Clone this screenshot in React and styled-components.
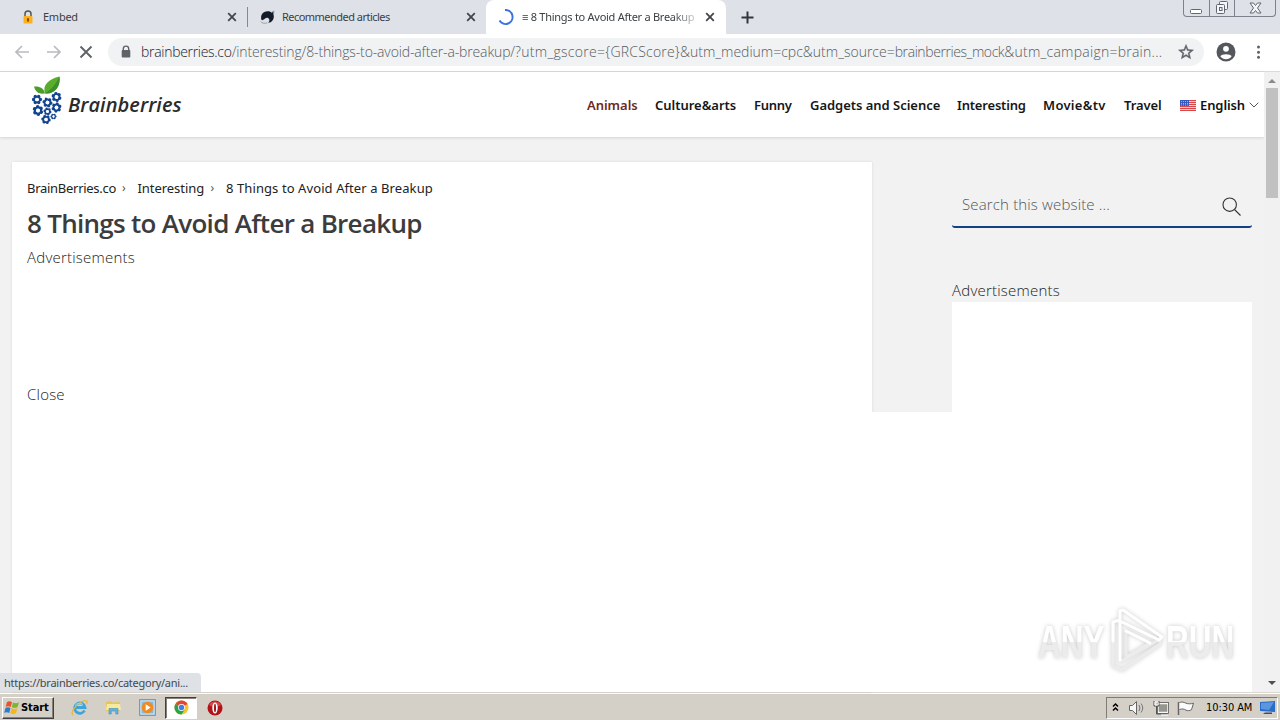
import React from 'react';
import styled, { createGlobalStyle, css } from 'styled-components';

const Global = createGlobalStyle`
  * { box-sizing: border-box; }
  html, body { margin: 0; padding: 0; }
  body { width: 1280px; height: 720px; overflow: hidden; background: #fff; font-family: "Noto Sans", "Open Sans", sans-serif; }
  svg { display: block; flex: none; }
`;

const Screen = styled.div`
  position: relative;
  width: 1280px;
  height: 720px;
  display: flex;
  flex-direction: column;
  overflow: hidden;
`;

const Label = styled.span`
  display: block;
  white-space: nowrap;
  flex: none;
  letter-spacing: ${(p) => p.$ls || 0}px;
`;

/* ---------- tab strip ---------- */
const TabStrip = styled.div`
  height: 34px;
  flex: none;
  display: flex;
  background: #dee1e8;
  font: 11px/34px "Noto Sans", sans-serif;
  color: #3c4043;
`;
const Tab = styled.div`
  width: ${(p) => p.$w}px;
  height: 34px;
  display: flex;
  align-items: center;
  padding: 0 ${(p) => p.$pr}px 0 ${(p) => p.$pl}px;
  gap: ${(p) => p.$gap}px;
  ${(p) => p.$active && css`
    background: #fff;
    border-radius: 8px 8px 0 0;
    color: #3c4043;
  `}
`;
const TabTitle = styled(Label)`
  flex: 1;
  overflow: hidden;
  ${(p) => p.$fade && css`
    -webkit-mask-image: linear-gradient(90deg, #000 86%, transparent 103%);
    mask-image: linear-gradient(90deg, #000 86%, transparent 103%);
  `}
`;
const Divider = styled.div`
  width: 1px;
  height: 20px;
  margin-top: 7px;
  background: #85888e;
`;
const NewTab = styled.div`
  display: flex;
  align-items: center;
  padding-left: 15px;
  flex: 1;
`;
const WindowButtons = styled.div`
  display: flex;
  width: 93px;
  height: 17px;
  margin-right: 4px;
  border: 1px solid #7d818b;
  border-top: 0;
  border-radius: 0 0 4px 4px;
`;
const WindowButton = styled.div`
  width: ${(p) => p.$w}px;
  display: flex;
  align-items: center;
  justify-content: center;
  & + & { border-left: 1px solid #7d818b; }
`;

/* ---------- address bar ---------- */
const Toolbar = styled.div`
  height: 38px;
  flex: none;
  display: flex;
  align-items: center;
  background: #fff;
  border-bottom: 1px solid #d9dadc;
  padding: 0 14px 1px 14px;
`;
const NavIcons = styled.div`
  display: flex;
  gap: 16px;
  margin-right: 14px;
`;
const Omnibox = styled.div`
  width: 1096px;
  height: 28px;
  border-radius: 14px;
  background: #f0f2f4;
  display: flex;
  align-items: center;
  padding: 0 9px 0 12px;
`;
const Url = styled.div`
  display: flex;
  flex: 1;
  margin-left: 9px;
  font: 300 14px/28px "Open Sans", "Noto Sans", sans-serif;
  color: #565b60;
`;
const UrlPart = styled(Label)`
  ${(p) => p.$host && css`color: #202124;`}
`;
const ToolbarEnd = styled.div`
  display: flex;
  align-items: center;
  gap: 17px;
  margin-left: 12px;
`;

/* ---------- page ---------- */
const Viewport = styled.div`
  height: 620px;
  flex: none;
  display: flex;
`;
const Page = styled.div`
  width: 1264px;
  display: flex;
  flex-direction: column;
  background: #f2f2f2;
`;
const SiteHeader = styled.header`
  height: 65px;
  flex: none;
  display: flex;
  background: #fff;
  box-shadow: 0 1px 3px rgba(0, 0, 0, 0.13);
  padding-left: 32px;
`;
const Logo = styled.div`
  display: flex;
  width: 555px;
`;
const LogoText = styled(Label)`
  font: italic 600 20px/30px "Open Sans", sans-serif;
  color: #2b2b2b;
  margin: 18px 0 0 4px;
`;
const Nav = styled.nav`
  display: flex;
  align-items: center;
  height: 65px;
  padding-top: 1px;
  font: 600 13px/20px "Noto Sans", sans-serif;
  color: #111;
`;
const NavItem = styled(Label)`
  width: ${(p) => p.$w}px;
  color: ${(p) => (p.$hot ? '#6d2a20' : '#161616')};
`;
const Language = styled.div`
  display: flex;
  align-items: center;
  gap: 4px;
`;
const Columns = styled.div`
  display: flex;
  height: 555px;
  padding: 25px 12px 0;
  position: relative;
`;
const Article = styled.main`
  width: 860px;
  background: #fff;
  padding: 16px 15px 0;
  box-shadow: 0 0 3px rgba(0, 0, 0, 0.1);
`;
const Crumbs = styled.div`
  display: flex;
  height: 20px;
  font: 13px/20px "Noto Sans", sans-serif;
  color: #222;
`;
const Crumb = styled(Label)`
  width: ${(p) => p.$w}px;
`;
const CrumbArrow = styled(Label)`
  width: 15.5px;
  font-size: 12px;
  line-height: 19px;
  color: #555;
`;
const Title = styled.h1`
  margin: 5px 0 0;
  font: 600 26px/40px "Open Sans", "Noto Sans", sans-serif;
  letter-spacing: -0.71px;
  color: #3c3c3c;
  white-space: nowrap;
`;
const Note = styled.p`
  margin: ${(p) => p.$mt || 0}px 0 0;
  font: 300 15px/24px "Open Sans", "Noto Sans", sans-serif;
  letter-spacing: ${(p) => p.$ls || 0}px;
  color: #222;
  white-space: nowrap;
`;
const Sidebar = styled.aside`
  width: 300px;
  margin-left: 80px;
  padding-top: 18px;
  display: flex;
  flex-direction: column;
`;
const Search = styled.div`
  height: 48px;
  display: flex;
  justify-content: space-between;
  padding: 12px 11px 0 10px;
  border-bottom: 2px solid #134182;
  border-radius: 3px;
  font: 300 15px/24px "Open Sans", "Noto Sans", sans-serif;
  color: #555;
  svg { margin-top: 5px; }
`;
const AdBox = styled.div`
  flex: 1;
  background: #fff;
`;
const AdOverlay = styled.div`
  position: absolute;
  left: 12px;
  right: 12px;
  top: 275px;
  bottom: 0;
  background: #fff;
`;
const ScrollTrack = styled.div`
  width: 16px;
  background: #f1f1f1;
  display: flex;
  flex-direction: column;
  align-items: center;
  padding: 7px 0 7px;
`;
const ScrollThumb = styled.div`
  width: 12px;
  height: 110px;
  margin: 5px 0 auto;
  background: #c1c1c1;
`;
const StatusBubble = styled.div`
  position: absolute;
  left: 0;
  top: 673px;
  width: 201px;
  height: 19px;
  background: #dee1e6;
  border-radius: 0 4px 0 0;
  padding-left: 4px;
  font: 11px/20px "Noto Sans", sans-serif;
  color: #45484c;
`;
const Watermark = styled.div`
  position: absolute;
  left: 1038px;
  top: 606px;
  width: 200px;
  height: 70px;
  display: flex;
  align-items: center;
  filter: drop-shadow(0 0 2px rgba(0, 0, 0, 0.22));
`;
const WatermarkText = styled.span`
  flex: none;
  width: 104px;
  margin-right: ${(p) => p.$pull}px;
  padding-top: 2px;
  font: 700 47px/70px "Liberation Sans", sans-serif;
  color: transparent;
  background: linear-gradient(#fff 0 51%, #ececec 51% 100%);
  -webkit-background-clip: text;
  background-clip: text;
  white-space: nowrap;
  transform: scaleX(${(p) => p.$sx});
  transform-origin: 0 50%;
`;

/* ---------- taskbar ---------- */
const Taskbar = styled.div`
  height: 28px;
  flex: none;
  display: flex;
  align-items: center;
  background: #d4cfc7;
  border-top: 1px solid #dcd9d3;
  box-shadow: inset 0 1px 0 #fff;
  padding: 2px 2px 0 2px;
  font: 11px/20px "DejaVu Sans Condensed", "DejaVu Sans", sans-serif;
  color: #000;
`;
const StartButton = styled.div`
  width: 52px;
  height: 22px;
  display: flex;
  align-items: center;
  gap: 1px;
  padding-left: 1px;
  font-weight: 700;
  border: 1px solid;
  border-color: #fff #404040 #404040 #fff;
  box-shadow: inset -1px -1px 0 #868279;
`;
const QuickLaunch = styled.div`
  display: flex;
  align-items: center;
  margin-left: 10px;
  flex: 1;
`;
const AppSlot = styled.div`
  width: 32px;
  height: 22px;
  margin-right: 1.8px;
  display: flex;
  align-items: center;
  justify-content: center;
  ${(p) => p.$active && css`
    background: #fff;
    border: 1px solid;
    border-color: #404040 #fff #fff #404040;
    box-shadow: inset 1px 1px 0 #868279;
  `}
`;
const Tray = styled.div`
  width: 172px;
  height: 22px;
  display: flex;
  align-items: center;
  border: 1px solid;
  border-color: #807c74 #fff #fff #807c74;
  padding-left: 5px;
`;
const Clock = styled(Label)`
  width: 48px;
  margin: 0 6px 0 10px;
`;

/* ---------- drawings ---------- */
const CloseX = () => (
  <svg width="10" height="10" viewBox="0 0 10 10" stroke="#43464b" strokeWidth="1.8"><path d="M1.200 1.200l7.600 7.600M8.800 1.200l-7.600 7.600" /></svg>
);
const PadlockEmoji = () => (
  <svg width="12" height="14" viewBox="0 0 12 14">
    <path d="M3 7V4a3 3 0 0 1 6 0v3" fill="none" stroke="#555" strokeWidth="1.5" />
    <rect x="1.5" y="6" width="9" height="7.5" rx="1" fill="#fbb01c" />
    <path d="M6 8.2v3.2" stroke="#7a3b00" strokeWidth="1.7" />
  </svg>
);
const PlanetIcon = () => (
  <svg width="15" height="14" viewBox="0 0 15 14">
    <path d="M1.500 10C0 5 3 1.200 7.500 1.200c2 0 3 .5 4 1.300L14 1.500l-.5 3C14.800 9 12 12.800 8 12.800c1.800-1 2-3.800 0-4.800C5.500 7 3.500 11 1.500 10z" fill="#141b28" />
    <path d="M.8 11.500c.5 1.800 4 2 6.500 1.500M11.500 2.300l2.500-1.400-.4 3.200" fill="none" stroke="#9a9fa9" />
  </svg>
);
const Berry = ({ x, y, r, a = 0 }) => (
  <g transform={`translate(${x} ${y}) rotate(${a})`}>
    {[0, 60, 120, 180, 240, 300].map((t) => (
      <circle key={t} cx={r * 0.7 * Math.cos((t * Math.PI) / 180)} cy={r * 0.7 * Math.sin((t * Math.PI) / 180)} r={r * 0.34} fill="#14468f" />
    ))}
    <circle r={r * 0.58} fill="none" stroke="#14468f" strokeWidth={r * 0.4} />
    <circle r={r * 0.38} fill="#fff" />
  </g>
);
const BerryLogo = () => (
  <svg width="32" height="54" viewBox="0 0 32 54">
    <path d="M13 21.500C5 22.500 3 18 2 14.500 8 14 12 16.500 13 21.500z" fill="#4c9d2d" />
    <path d="M13 21.500C10 13 17 7 27.500 4.500 29 15 22 22.500 13 21.500z" fill="#58ad2c" />
    <path d="M13 21.500C18 19 24 12 27.500 4.500 29 15 22 22.500 13 21.500z" fill="#3c8e2b" />
    <Berry x={5} y={27.500} r={4.900} /><Berry x={24.500} y={25} r={4.900} a={20} />
    <Berry x={15.500} y={30.500} r={4.900} a={10} /><Berry x={6} y={38.500} r={5.300} a={25} />
    <Berry x={24.500} y={35.500} r={4.900} a={40} /><Berry x={15.500} y={39.500} r={3.900} a={12} />
    <Berry x={21.500} y={44.500} r={3} /><Berry x={14} y={47.500} r={4.600} a={8} />
  </svg>
);
const Flag = () => (
  <svg width="16" height="11" viewBox="0 0 16 11">
    <rect width="16" height="11" fill="#f6dcdc" />
    {[0, 2, 4, 6, 8, 10].map((y) => <rect key={y} y={y} width="16" height="1.100" fill="#d6484a" />)}
    <rect width="9" height="6" fill="#3559c0" />
    <path d="M1 1.500h7M1 3.500h7M1 5h7" stroke="#b8c6f2" strokeWidth=".8" strokeDasharray="1 1" />
  </svg>
);
const WatermarkLogo = () => (
  <svg width="60" height="70" viewBox="0 0 60 70" fill="none" strokeLinejoin="round" strokeLinecap="round">
    <path d="M7 18v42l9 4 38-26v-5M14 56l40-23M20 25v26l24-14" stroke="#ececec" strokeWidth="3" />
    <path d="M7 35V16l7-2M14 54V5l3-1 39 27-3 3L14 15M20 25l24 12" stroke="#fff" strokeWidth="3" />
  </svg>
);
const StartFlag = () => (
  <svg width="16" height="15" viewBox="0 0 16 15">
    <path d="M3 2c2-1 3-1 5 .2L6.700 7C5 6 3.500 6 1.700 6.800z" fill="#e5552b" />
    <path d="M9 2.500c2 1 4 1 6-.2L13.600 7c-2 1.200-4 1-5.800.2z" fill="#7db52e" />
    <path d="M1.500 8C3 7 5 7.200 6.500 8L5.200 13C3.500 12 2 12 .2 12.800z" fill="#2e7cc9" />
    <path d="M7.500 8.300c2 1 4 1 5.800 0L12 13.200c-2 1-4 .8-5.800 0z" fill="#f5b81c" />
  </svg>
);
const IeIcon = () => (
  <svg width="18" height="18" viewBox="0 0 18 18" fill="none">
    <path d="M13.500 11.500A5.200 5.200 0 1 1 14 8.500H4.500" stroke="#3da4dc" strokeWidth="2.800" />
    <path d="M2 16C-1.500 13.500 6 4 13 1.800c3-.9 4 .8 2.500 3.200" stroke="#e3b936" strokeWidth="1.200" />
    <path d="M4 6.500a5.500 5.500 0 0 1 8-1" stroke="#9ad6f3" />
  </svg>
);
const FolderIcon = () => (
  <svg width="17" height="17" viewBox="0 0 17 17">
    <path d="M1 3l5-1 1 1.500 8-.5v9H1z" fill="#e6c65a" />
    <path d="M2 5h13l1 6H1z" fill="#f8e9a0" />
    <path d="M4 15V9.500h9V15h-2.200v-3H6.200v3z" fill="#62b4df" stroke="#3d92c0" strokeWidth=".6" />
  </svg>
);
const PlayerIcon = () => (
  <svg width="17" height="17" viewBox="0 0 17 17">
    <rect x=".7" y=".7" width="15.600" height="15.600" fill="#cfe5f5" stroke="#4d92c4" />
    <rect x="2.500" y="2.500" width="12" height="12" fill="#8fb9d8" />
    <circle cx="8.500" cy="8.500" r="5.800" fill="#f28a1c" /><path d="M6.700 5.200v6.600l5-3.300z" fill="#fff" />
  </svg>
);
const ChromeIcon = () => (
  <svg width="15" height="15" viewBox="0 0 16 16">
    <circle cx="8" cy="8" r="7.500" fill="#f8c52c" />
    <path d="M8 8L1.500 4.250A7.500 7.500 0 0 1 14.500 4.250z" fill="#e2453a" />
    <path d="M8 8L1.500 4.250A7.500 7.500 0 0 0 8 15.500l3.500-5.500z" fill="#2ba24c" />
    <circle cx="8" cy="8" r="3.700" fill="#fff" /><circle cx="8" cy="8" r="2.900" fill="#3f7fe8" />
  </svg>
);
const OperaIcon = () => (
  <svg width="16" height="16" viewBox="0 0 16 16">
    <circle cx="8" cy="8" r="7.500" fill="#b31218" /><path d="M2 5a7 7 0 0 1 12 0L8 8z" fill="#d4494b" />
    <ellipse cx="8" cy="8" rx="2.700" ry="5.600" fill="#fff" /><ellipse cx="8" cy="8" rx="1" ry="4.300" fill="#98161a" />
  </svg>
);

const LINKS = [
  ['Animals', 68, -0.03], ['Culture&arts', 99, -0.02], ['Funny', 56, -0.28],
  ['Gadgets and Science', 147, -0.03], ['Interesting', 86, -0.18], ['Movie&tv', 81, 0.3], ['Travel', 56, -0.1],
];

const URL_PARTS = [
  ['brainberries.co', -0.3, true],
  ['/interesting/8-things-to-avoid-after-a-breakup/', -0.14],
  ['?utm_gscore=', 0.3],
  ['{GRCScore}', 0.2],
  ['&utm_medium=cpc&utm_source=', 0],
  ['brainberries_mock', -0.42],
  ['&utm_campaign=brain...', 0.25],
];

export default function App() {
  return (
    <>
      <Global />
      <Screen>
        <TabStrip>
          <Tab $w={247} $pl={22} $pr={10} $gap={9}><PadlockEmoji /><TabTitle $ls={-0.25}>Embed</TabTitle><CloseX /></Tab>
          <Divider />
          <Tab $w={238} $pl={12} $pr={10} $gap={7}><PlanetIcon /><TabTitle $ls={-0.53}>Recommended articles</TabTitle><CloseX /></Tab>
          <Tab $w={240} $pl={12} $pr={11} $gap={8} $active>
            <svg width="16" height="16" viewBox="0 0 16 16"><path d="M7 1a7 7 0 1 1-5.500 10.500" fill="none" stroke="#3b72dc" strokeWidth="2" /></svg>
            <TabTitle $ls={-0.27} $fade>≡ 8 Things to Avoid After a Breakup</TabTitle><CloseX />
          </Tab>
          <NewTab><svg width="13" height="13" viewBox="0 0 13 13" stroke="#33363b" strokeWidth="2"><path d="M6.500 .5v12M.5 6.500h12" /></svg></NewTab>
          <WindowButtons>
            <WindowButton $w={25}><svg width="13" height="13" viewBox="0 0 13 13"><rect x=".5" y="7.500" width="11" height="4" rx="1" fill="#fff" stroke="#62666f" /></svg></WindowButton>
            <WindowButton $w={25}><svg width="14" height="14" viewBox="0 0 14 14" fill="#f5f6f8" stroke="#62666f"><rect x="4.500" y=".5" width="8" height="8" rx="1" /><rect x="1.500" y="3.500" width="8" height="9" rx="1" /><rect x="4.500" y="6.500" width="2.500" height="3" /></svg></WindowButton>
            <WindowButton $w={41}><svg width="13" height="12" viewBox="0 0 13 12" fill="#f5f6f8" stroke="#62666f"><path d="M1 1h3.500l2 2.500 2-2.500H12L8.500 6l3.500 5H8.500l-2-2.500-2 2.500H1l3.500-5z" /></svg></WindowButton>
          </WindowButtons>
        </TabStrip>

        <Toolbar>
          <NavIcons>
            <svg width="16" height="16" viewBox="0 0 16 16" fill="none" stroke="#b9bbbe" strokeWidth="1.700"><path d="M15 8H2M8 2L2 8l6 6" /></svg>
            <svg width="16" height="16" viewBox="0 0 16 16" fill="none" stroke="#b9bbbe" strokeWidth="1.700"><path d="M1 8h13M8 2l6 6-6 6" /></svg>
            <svg width="16" height="16" viewBox="0 0 16 16" stroke="#5f6368" strokeWidth="1.900"><path d="M2.500 2.500l11 11M13.500 2.500l-11 11" /></svg>
          </NavIcons>
          <Omnibox>
            <svg width="12" height="14" viewBox="0 0 12 14"><path d="M3.300 6V3.800a2.700 2.700 0 0 1 5.400 0V6" fill="none" stroke="#5f6368" strokeWidth="1.400" /><rect x="1.700" y="5" width="8.600" height="7.500" rx="1" fill="#5f6368" /></svg>
            <Url>{URL_PARTS.map(([t, ls, host]) => <UrlPart key={t} $ls={ls} $host={host}>{t}</UrlPart>)}</Url>
            <svg width="18" height="18" viewBox="0 0 24 24" fill="#5f6368" stroke="#5f6368" strokeWidth=".6"><path d="M22 9.240l-7.190-.62L12 2 9.190 8.630 2 9.240l5.460 4.730L5.820 21 12 17.270 18.180 21l-1.630-7.030L22 9.240zM12 15.400l-3.760 2.270 1-4.280-3.320-2.880 4.380-.38L12 6.100l1.710 4.040 4.380.38-3.320 2.880 1 4.280L12 15.400z" /></svg>
          </Omnibox>
          <ToolbarEnd>
            <svg width="20" height="20" viewBox="0 0 20 20"><circle cx="10" cy="10" r="9.500" fill="#54585d" /><circle cx="10" cy="6.800" r="2.900" fill="#fff" /><path d="M4.300 14.300c1-2.800 10.400-2.800 11.400 0A7 7 0 0 1 4.300 14.300z" fill="#fff" /></svg>
            <svg width="12" height="14" viewBox="0 0 12 14" fill="#5f6368"><circle cx="5.500" cy="2" r="1.500" /><circle cx="5.500" cy="7.200" r="1.500" /><circle cx="5.500" cy="12.300" r="1.500" /></svg>
          </ToolbarEnd>
        </Toolbar>

        <Viewport>
          <Page>
            <SiteHeader>
              <Logo><BerryLogo /><LogoText $ls={0.05}>Brainberries</LogoText></Logo>
              <Nav>
                {LINKS.map(([t, w, ls], i) => <NavItem key={t} $w={w} $ls={ls} $hot={i === 0}>{t}</NavItem>)}
                <Language>
                  <Flag /><Label $ls={-0.1}>English</Label>
                  <svg width="10" height="6" viewBox="0 0 10 6" fill="none" stroke="#555"><path d="M.7.700L5 5 9.300.700" /></svg>
                </Language>
              </Nav>
            </SiteHeader>
            <Columns>
              <Article>
                <Crumbs>
                  <Crumb $w={95} $ls={-0.28}>BrainBerries.co</Crumb><CrumbArrow>›</CrumbArrow>
                  <Crumb $w={73} $ls={-0.05}>Interesting</Crumb><CrumbArrow>›</CrumbArrow>
                  <Label $ls={0.09}>8 Things to Avoid After a Breakup</Label>
                </Crumbs>
                <Title>8 Things to Avoid After a Breakup</Title>
                <Note $mt={2} $ls={0.22}>Advertisements</Note>
                <Note $mt={113} $ls={0.22}>Close</Note>
              </Article>
              <Sidebar>
                <Search>
                  <Label $ls={0.15}>Search this website ...</Label>
                  <svg width="19" height="19" viewBox="0 0 19 19" fill="none" stroke="#333" strokeWidth="1.100"><circle cx="7.700" cy="7.700" r="6.700" /><path d="M12.500 12.500l6 6" /></svg>
                </Search>
                <Note $mt={50} $ls={0.22}>Advertisements</Note>
                <AdBox />
              </Sidebar>
              <AdOverlay />
            </Columns>
          </Page>
          <ScrollTrack>
            <svg width="8" height="4" viewBox="0 0 8 4"><path d="M0 4l4-4 4 4z" fill="#8b8b8b" /></svg>
            <ScrollThumb />
            <svg width="8" height="4" viewBox="0 0 8 4"><path d="M0 0h8L4 4z" fill="#505050" /></svg>
          </ScrollTrack>
        </Viewport>

        <Taskbar>
          <StartButton><StartFlag /><Label $ls={-0.1}>Start</Label></StartButton>
          <QuickLaunch>
            <AppSlot><IeIcon /></AppSlot><AppSlot><FolderIcon /></AppSlot><AppSlot><PlayerIcon /></AppSlot>
            <AppSlot $active><ChromeIcon /></AppSlot><AppSlot><OperaIcon /></AppSlot>
          </QuickLaunch>
          <Tray>
            <svg width="74" height="18" viewBox="0 0 74 18" fill="none">
              <path d="M1 7.500L3.500 5 6 7.500M1 11.500L3.500 9 6 11.500" stroke="#000" strokeWidth="1.500" />
              <path d="M17.500 6.500h3l4-4v13l-4-4h-3z" fill="#f7f7f7" stroke="#666" />
              <path d="M27 6q2 3 0 6M29 4.500q3.500 4.500 0 9" stroke="#777" />
              <rect x="46" y="4.500" width="10" height="9" fill="#96968f" stroke="#f8f8f8" strokeWidth="1.500" />
              <rect x="45.500" y="3.500" width="11" height="11" stroke="#555" strokeWidth=".8" />
              <path d="M42 2v5h5V2M44.500 7v8h11" stroke="#555" /><path d="M43 3h3v3h-3zM49 16h7" stroke="#fff" />
              <path d="M66.500 3v13" stroke="#666" strokeWidth="1.500" />
              <path d="M67.500 3.500c2-.8 4-.5 6.500.7v7c-2-1.500-4-1.500-6.500-.7z" fill="#fbfbfb" />
              <path d="M67.500 3.500c2-.8 4-.5 6.500.7M67.500 10.500c2.500-.8 4.500-.8 6.500.7" stroke="#666" />
            </svg>
            <svg width="10" height="18" viewBox="0 0 10 18"><path d="M0 4.200c2 .8 5 .8 7.500 0l-2 6.500c-2 1.200-4 1.200-5.500.5z" fill="#fbfbfb" /><path d="M0 4.200c2 .8 5 .8 7.500 0l-2 6.500c-2 1.200-4 1.200-5.500.5" fill="none" stroke="#666" /></svg>
            <Clock $ls={-0.08}>10:30 AM</Clock>
            <svg width="16" height="15" viewBox="0 0 16 15"><path d="M0 2l15-1v11l-15-1z" fill="#2a6cc7" /><path d="M1 3l13-1-5 8-8-1z" fill="#5b97df" /><path d="M5 12.500h7v1.500H3z" fill="#33506f" /></svg>
          </Tray>
        </Taskbar>

        <StatusBubble><Label $ls={-0.26}>https://brainberries.co/category/ani...</Label></StatusBubble>
        <Watermark>
          <WatermarkText $pull={-36} $sx={0.67}>ANY</WatermarkText>
          <WatermarkLogo />
          <WatermarkText $pull={0} $sx={0.67}>RUN</WatermarkText>
        </Watermark>
      </Screen>
    </>
  );
}
